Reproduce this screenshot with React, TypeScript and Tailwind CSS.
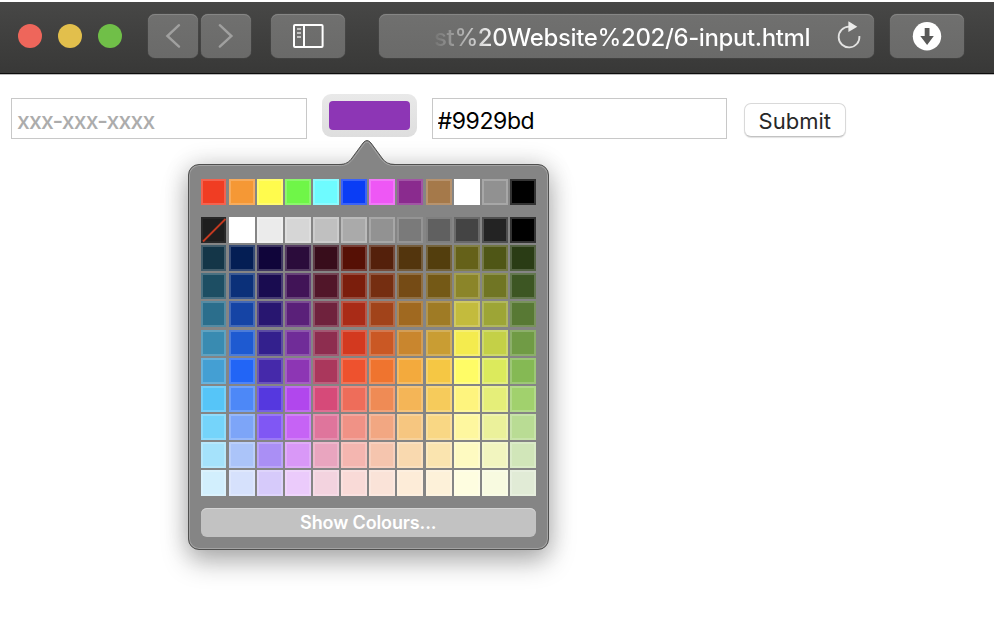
import React from 'react';

const favourites = ['#f03d23', '#f59835', '#fffb4d', '#6ff648', '#6efbff', '#0a3df5', '#ee57f5', '#8a2b8e', '#a5794a', '#ffffff', '#919191', '#000000'];

const palette = [
  ['#1e1e1e', '#ffffff', '#ebebeb', '#d6d6d6', '#c0c0c0', '#aaaaaa', '#929292', '#7a7a7a', '#606060', '#444444', '#232323', '#000000'],
  ['#143648', '#041e54', '#10053a', '#2b0c3b', '#380d1b', '#561005', '#54200b', '#53350d', '#533e0d', '#656119', '#4f5616', '#2a3c15'],
  ['#1d4e63', '#0b3079', '#190c50', '#411457', '#511629', '#7b1e0c', '#752e11', '#754b15', '#745916', '#8b8529', '#707524', '#3d5623'],
  ['#2b6e8c', '#1544a5', '#281670', '#5a2079', '#6f223d', '#a92b17', '#a1431a', '#a06920', '#9f7b25', '#c3bb3d', '#9da536', '#587934'],
  ['#398bb1', '#1e5ad1', '#33208d', '#702c98', '#8d2d4f', '#d3391f', '#ca5824', '#c9862e', '#c99d33', '#f4eb4e', '#c4d047', '#709b45'],
  ['#449fd3', '#2265f6', '#4529aa', '#8d36b4', '#aa375c', '#ee522e', '#ef742f', '#f3aa3d', '#f5c744', '#fffc66', '#dcea5c', '#85b954'],
  ['#56c5f8', '#4d88f7', '#5538df', '#b147ed', '#d64a79', '#ee6d5a', '#ef8b55', '#f4b557', '#f6cb5b', '#fef47e', '#e5ee79', '#a1d16d'],
  ['#75d4fa', '#7da5f8', '#8057f4', '#c663f5', '#df759c', '#f09286', '#f2a782', '#f6c680', '#f9d784', '#fef79f', '#ebf19b', '#b9dc94'],
  ['#a5e2fb', '#abc4f9', '#aa8ff5', '#d998f7', '#e9a5bf', '#f4b6b0', '#f5c5ae', '#f9d9af', '#fae4af', '#fefac1', '#f2f5bf', '#d1e6b9'],
  ['#d2effd', '#d6e1fc', '#d6cafa', '#ebcbfb', '#f3d3df', '#f9dad7', '#fae3d8', '#fdecd8', '#fdf1d9', '#fefde0', '#f8fae0', '#e1ebd6'],
];

function Swatch({ color, none }: { color: string; none?: boolean }) {
  return (
    <div className={`h-[26px] border-2 ${none ? 'border-[#282828]' : 'border-white/20'}`} style={{ backgroundColor: color }}>
      {none && (
        <svg className="h-full w-full overflow-visible" viewBox="0 0 22 22">
          <path d="M0 22.5 22.5 0" stroke="#c43a21" strokeWidth="1.8" />
        </svg>
      )}
    </div>
  );
}

function ToolButton({ className, children }: { className: string; children: React.ReactNode }) {
  return (
    <button className={`flex h-11 shrink-0 items-center justify-center rounded-[7px] bg-gradient-to-b from-[#70706f] to-[#6a6a69] shadow-[inset_0_1px_0_#868685,0_0_1px_#777] ${className}`}>
      {children}
    </button>
  );
}

function Toolbar() {
  return (
    <header className="mt-[2px] flex h-[73px] items-start border-b border-[#bcbcbc] bg-gradient-to-b from-[#474746] to-[#383837] pt-3 pl-[17.5px] shadow-[inset_0_-1px_0_#0c0c0c]">
      <div className="flex gap-4 pt-[10px]">
        <span className="size-[24.2px] rounded-full bg-[#ee665b]" />
        <span className="size-[24.2px] rounded-full bg-[#e2bf4c]" />
        <span className="size-[24.2px] rounded-full bg-[#70bf48]" />
      </div>
      <ToolButton className="ml-[26px] w-[50px]">
        <svg width="50" height="44" fill="none" stroke="#a0a09f" strokeWidth="2.4" strokeLinecap="round"><path d="M31 11.2 19.4 22 31 32.6" /></svg>
      </ToolButton>
      <ToolButton className="ml-[3px] w-[50px]">
        <svg width="50" height="44" fill="none" stroke="#a0a09f" strokeWidth="2.4" strokeLinecap="round"><path d="M18.8 11.2 30.4 22 18.8 32.6" /></svg>
      </ToolButton>
      <ToolButton className="ml-5 w-[74px]">
        <svg width="74" height="44" fill="none" stroke="#fff" strokeWidth="2">
          <rect x="23" y="11" width="28.6" height="22" rx="1" />
          <path d="M33 11v22" />
          <path d="M26 15h4M26 19h4M26 23h4" stroke="#dededd" strokeWidth="1.7" />
        </svg>
      </ToolButton>
      <div className="ml-[34px] flex h-11 w-[495px] shrink-0 items-center rounded-[7px] bg-gradient-to-b from-[#70706f] to-[#6a6a69] pl-[55px] shadow-[inset_0_1px_0_#868685,0_0_1px_#777]">
        <span className="w-[377px] bg-gradient-to-r from-[#747473] via-white via-[17%] to-white bg-clip-text pt-[3px] font-[Inter,sans-serif] text-[24px] leading-[34px] font-medium tracking-[-0.38px] whitespace-nowrap text-transparent">st%20Website%202/6-input.html</span>
        <svg className="ml-[26px]" width="26" height="32" fill="none" stroke="#e3e3e2" strokeWidth="1.8">
          <path d="M14.5 6.6H12a10.4 10.4 0 1 0 10.4 9.4" />
          <path d="M11.4 1.3v10.6l8.9-5.2Z" fill="#ececeb" stroke="none" />
        </svg>
      </div>
      <ToolButton className="ml-4 w-[74px]">
        <svg width="74" height="44">
          <circle cx="37" cy="22.2" r="14.2" fill="#fff" />
          <path d="M34.7 14h4.8v8h4.3l-6.7 9-6.8-9h4.4Z" fill="#595958" />
        </svg>
      </ToolButton>
    </header>
  );
}

function Popover() {
  return (
    <div className="absolute top-[164px] left-[187.5px] h-[385.5px] w-[361.5px] rounded-[11px] border border-[#50504f] bg-[#858585] px-3 pt-[14px] shadow-[inset_0_0_0_1px_#a3a3a3,0_12px_27px_rgba(0,0,0,0.28),0_0_24px_rgba(0,0,0,0.16)]">
      <svg className="absolute -top-[27px] left-[150.5px]" width="56" height="30" viewBox="0 0 56 30">
        <path d="M0 27C7 27 10 24 13 20L24 5Q28 0 32 5L43 20Q47 27 56 27V30H0Z" fill="#858585" />
        <path d="M0 27.7C7 27.7 11 25 14 21L25 6Q28 2 31 6L42 21Q47 27.7 56 27.7" fill="none" stroke="#a3a3a3" />
        <path d="M0 26.5C7 26.5 10 24 13 20L24 5Q28 0 32 5L43 20Q47 26.5 56 26.5" fill="none" stroke="#50504f" />
      </svg>
      <div className="grid grid-cols-12 gap-x-[2.15px]">
        {favourites.map((c) => <Swatch key={c} color={c} />)}
      </div>
      <div className="mt-3 grid grid-cols-12 gap-x-[2.15px] gap-y-[2.16px]">
        {palette.flatMap((row, r) => row.map((c, i) => <Swatch key={`${r}-${i}`} color={c} none={r === 0 && i === 0} />))}
      </div>
      <button className="mt-3 flex h-[28.5px] w-full items-center justify-center rounded-[6px] bg-[#c2c2c2] font-[Inter,sans-serif] text-[18px] font-semibold tracking-[-0.13px] text-white shadow-[inset_0_1px_0_#d5d5d5]">Show Colours...</button>
    </div>
  );
}

export default function App() {
  return (
    <div className="relative h-[626px] w-[994px] overflow-hidden bg-white">
      <Toolbar />
      <main className="flex items-start pt-[18.5px] pl-[11px]">
        <input className="mt-[4.5px] h-[41px] w-[296px] border border-[#c8c8c8] bg-white px-[5px] pt-1 font-[Inter,sans-serif] text-[23px] font-medium tracking-[-0.83px] outline-none placeholder:text-[#acacac]" placeholder="xxx-xxx-xxxx" />
        <button className="ml-[15px] flex h-[43px] w-[95px] items-start rounded-[9px] bg-gradient-to-b from-[#e9e9e9] to-[#dedede] p-[7px]">
          <span className="h-[29px] w-full rounded-[4px] bg-[#8d36b5]" />
        </button>
        <input className="mt-[4.5px] ml-[14.5px] h-[41px] w-[295.5px] border border-[#c8c8c8] bg-white px-[5px] pt-[5px] font-[Inter,sans-serif] text-[23px] tracking-[-0.4px] text-black outline-none" defaultValue="#9929bd" />
        <button className="mt-[9px] ml-[17px] h-[34px] w-[101.5px] rounded-[7px] border border-[#d9d9d9] border-b-[#c2c2c2] bg-white pt-px font-[Inter,sans-serif] text-[22px] leading-8 text-[#272727] shadow-[0_1px_1px_rgba(0,0,0,0.12)]">Submit</button>
      </main>
      <Popover />
    </div>
  );
}
